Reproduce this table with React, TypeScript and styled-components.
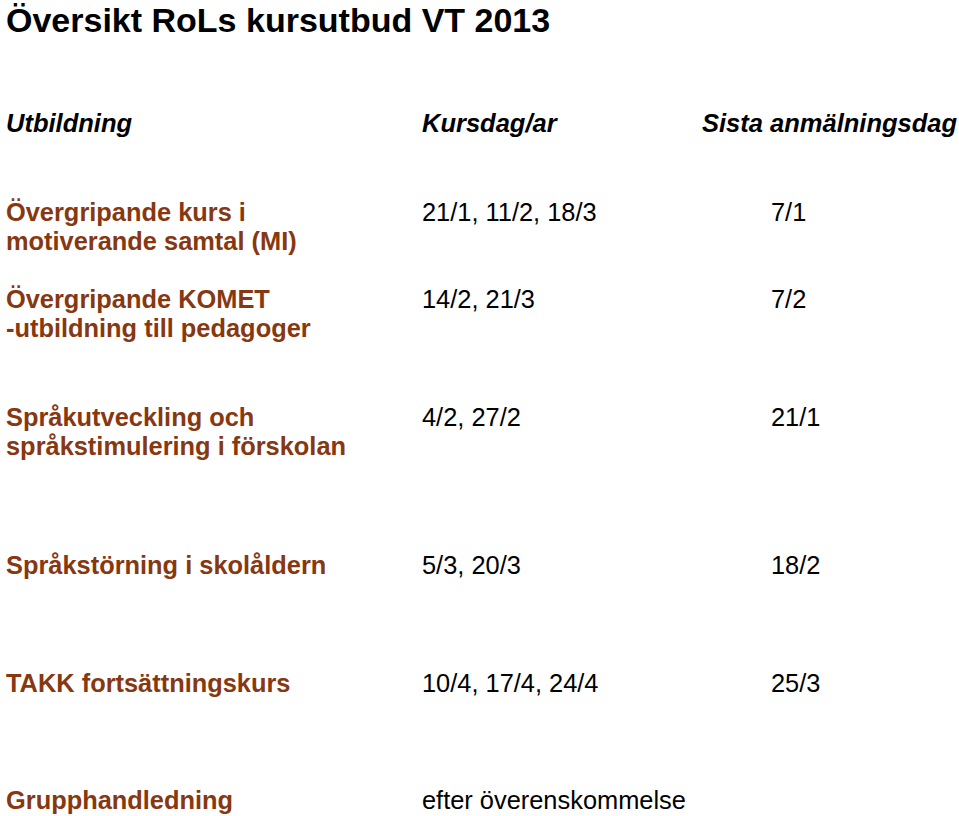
import React from 'react';
import styled, { createGlobalStyle } from 'styled-components';

const GlobalStyle = createGlobalStyle`
  body {
    margin: 0;
    background: #ffffff;
    font-family: 'Liberation Sans', Arial, sans-serif;
  }
`;

const S = {
  Page: styled.div`
    padding: 0 0 0 6px;
    width: 959px;
    height: 816px;
    box-sizing: border-box;
    overflow: hidden;
    color: #000;
  `,
  Title: styled.h1`
    margin: 0;
    font-size: 34px;
    line-height: 40px;
    font-weight: 700;
  `,
  HeaderRow: styled.div`
    display: grid;
    grid-template-columns: 416px 280px 1fr;
    margin-top: 69px;
    font-size: 25.5px;
    line-height: 29px;
    font-weight: 700;
    font-style: italic;
  `,
  Row: styled.div<{ $gap: number }>`
    display: grid;
    grid-template-columns: 416px 349px 1fr;
    margin-top: ${(p) => p.$gap}px;
    font-size: 25.4px;
    line-height: 29px;
  `,
  Course: styled.div`
    color: #873810;
    font-weight: 700;
  `,
  Cell: styled.div<{ $span?: boolean }>`
    white-space: nowrap;
    ${(p) => (p.$span ? 'grid-column: span 2;' : '')}
  `,
};

interface Course {
  name: string[];
  dates: string;
  deadline?: string;
  gap: number;
}

const courses: Course[] = [
  { name: ['Övergripande kurs i', 'motiverande samtal (MI)'], dates: '21/1, 11/2, 18/3', deadline: '7/1', gap: 60 },
  { name: ['Övergripande KOMET', '-utbildning till pedagoger'], dates: '14/2, 21/3', deadline: '7/2', gap: 29 },
  { name: ['Språkutveckling och', 'språkstimulering i förskolan'], dates: '4/2, 27/2', deadline: '21/1', gap: 60 },
  { name: ['Språkstörning i skolåldern'], dates: '5/3, 20/3', deadline: '18/2', gap: 90 },
  { name: ['TAKK fortsättningskurs'], dates: '10/4, 17/4, 24/4', deadline: '25/3', gap: 89 },
  { name: ['Grupphandledning'], dates: 'efter överenskommelse', gap: 88 },
];

export default function App() {
  return (
    <>
      <GlobalStyle />
      <S.Page>
        <S.Title>Översikt RoLs kursutbud VT 2013</S.Title>
        <S.HeaderRow>
          <div>Utbildning</div>
          <div>Kursdag/ar</div>
          <div>Sista anmälningsdag</div>
        </S.HeaderRow>
        {courses.map((c) => (
          <S.Row key={c.name[0]} $gap={c.gap}>
            <S.Course>
              {c.name.map((line) => (
                <div key={line}>{line}</div>
              ))}
            </S.Course>
            <S.Cell $span={!c.deadline}>{c.dates}</S.Cell>
            {c.deadline && <S.Cell>{c.deadline}</S.Cell>}
          </S.Row>
        ))}
      </S.Page>
    </>
  );
}
